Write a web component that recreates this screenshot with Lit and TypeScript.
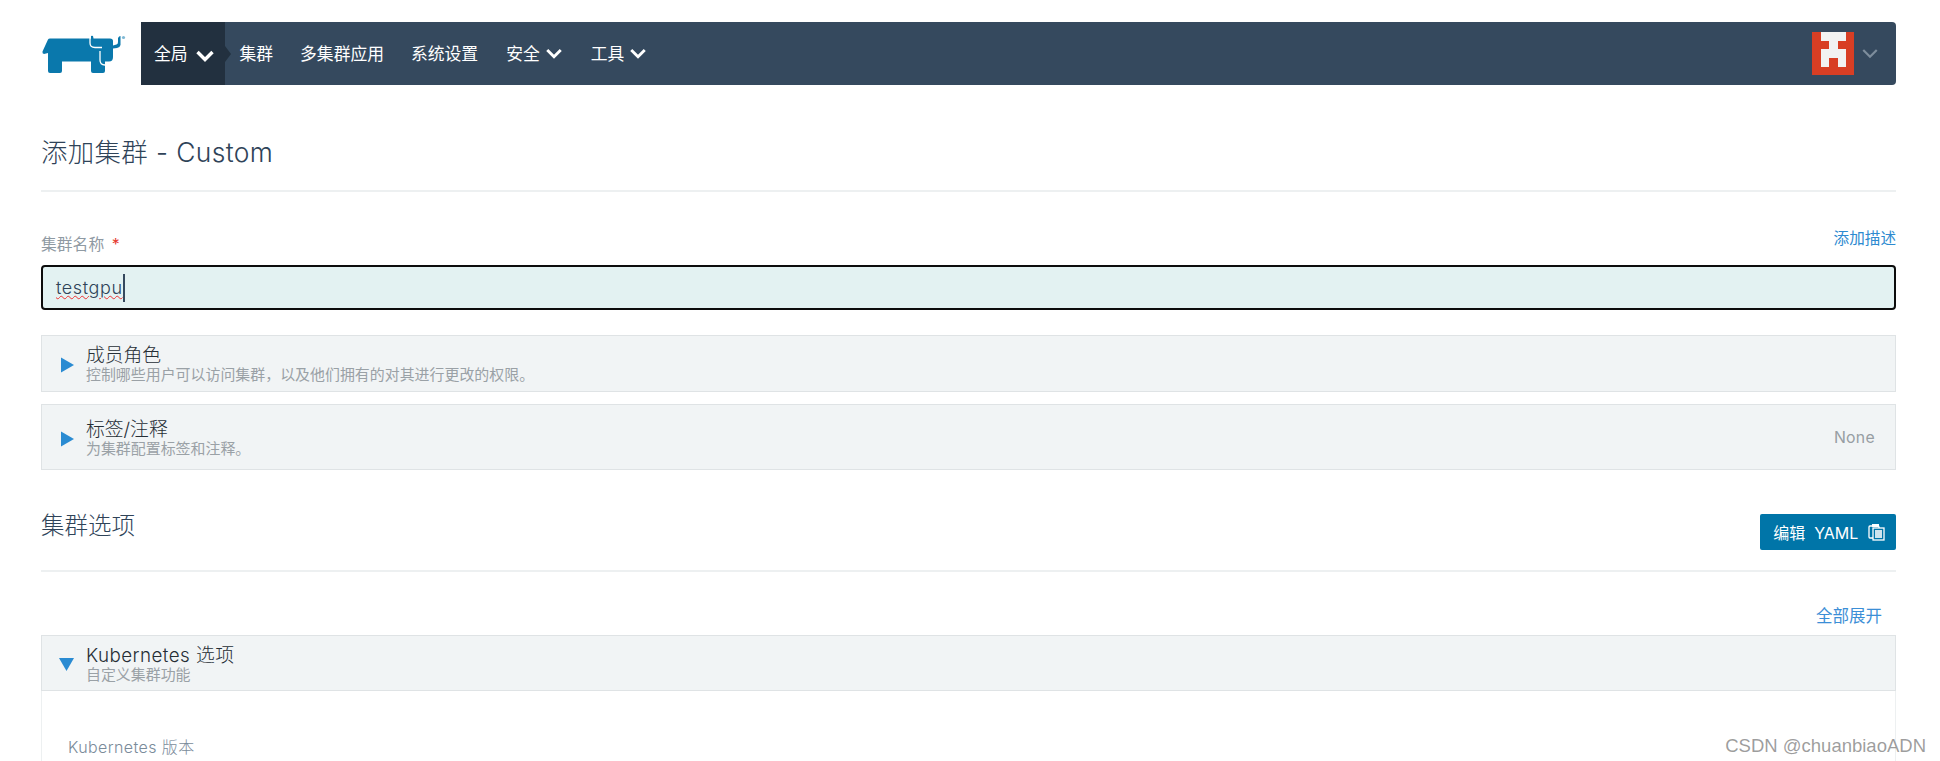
import { LitElement, html, css, svg } from "lit";
import { customElement } from "lit/decorators.js";

const chevron = (w: number, color = "#fff", sw = 3) => html`<svg class="chev" width=${w} height=${Math.round(w * 0.7)} viewBox="0 0 20 14"><path d="M2.5 3 L10 10.5 L17.5 3" fill="none" stroke=${color} stroke-width=${sw}/></svg>`;

const logo = svg`<svg width="86" height="40" viewBox="0 0 86 40">
  <path d="M6 4.5 Q6.5 3.5 8 3.5 L48 3.5 Q49 3.5 49 4 L49 1 Q50 0.5 51 1 L51.5 3.5 L68 3.5 Q71 3.5 71 6 L71 22 Q71 26.5 67 26.5 L63 26.5 L63 36 Q63 38 61 38 L51 38 Q49 38 49 36 L49 26.5 L20 26.5 L20 36 Q20 38 18 38 L8 38 Q6 38 6 36 L6 18 L2 19 Q0 18.5 0.5 16.5 Z" fill="#0a78ac"/>
  <path d="M76 3 Q77 1 78.5 1 L78.5 10 Q78 12.5 75 13 L71 13.5 L71 10.5 L74.5 9.5 Q76 9 76 7 Z" fill="#0a78ac"/>
  <path d="M48 3 L48 8 Q48 12.5 53 12.5 L60 12.5 M58 16 L58 25 Q58 30 63 30 L66 30" fill="none" stroke="#fff" stroke-width="1.3"/>
  <circle cx="81.5" cy="2.5" r="1.6" fill="#7fb8d4"/>
</svg>`;

const avatar = svg`<svg width="42" height="43" viewBox="0 0 42 43" shape-rendering="crispEdges">
  <rect width="42" height="43" fill="#d83e24"/>
  <path d="M8.5 0 H34 V8.5 H25.5 V17 H34 V34.5 H25.5 V26 H17 V34.5 H8.5 V17 H17 V8.5 H8.5 Z" fill="#f2f2f2"/>
</svg>`;

const pasteIcon = svg`<svg width="17" height="18" viewBox="0 0 17 18">
  <rect x="1" y="3" width="10" height="12" rx="1" fill="none" stroke="#fff" stroke-width="1.3"/>
  <rect x="5" y="5" width="11" height="12" fill="#0075a8" stroke="#fff" stroke-width="1.3"/>
  <rect x="7" y="7" width="7" height="8" fill="#cfe4ee"/>
  <rect x="4" y="1" width="7" height="3" fill="#fff"/>
</svg>`;

@customElement("app-root")
export class AppRoot extends LitElement {
  static styles = css`
    :host {
      display: block;
      position: relative;
      height: 761px;
      overflow: hidden;
      background: #fff;
      color: #2f4358;
      font-family: "Inter", "Noto Sans CJK SC", sans-serif;
      font-weight: 400;
    }
    .page { padding: 22px 44px 0 41px; }
    .top { display: flex; height: 63px; }
    .logo { width: 100px; display: flex; align-items: flex-start; padding-top: 13px; box-sizing: border-box; margin-left: 1px; margin-right: -1px; }
    .nav {
      flex: 1;
      display: flex;
      align-items: center;
      background: #35495e;
      border-radius: 0 4px 4px 0;
      color: #fff;
      font-size: 16.8px;
    }
    .nav .item { display: flex; align-items: center; gap: 5px; padding: 0 13.5px; height: 100%; line-height: 60px; }
    .nav .active {
      position: relative;
      width: 84px;
      box-sizing: border-box;
      padding: 0 0 0 13px;
      background: #22303f;
      gap: 7px;
    }
    .nav .active .chev { margin-top: 4px; }
    .nav .active::after {
      content: "";
      position: absolute;
      left: 100%;
      top: 50%;
      margin-top: -8px;
      border-left: 6px solid #22303f;
      border-top: 8px solid transparent;
      border-bottom: 8px solid transparent;
    }
    .nav .shift1 { margin-left: 1px; }
    .nav .spacer { flex: 1; }
    .nav .user { display: flex; align-items: center; gap: 7px; padding-right: 17px; }
    .chev { display: block; }
    .title {
      margin: 0;
      height: 107px;
      box-sizing: border-box;
      padding-top: 28px;
      border-bottom: 2px solid #edf0f1;
      display: flex;
      align-items: center;
      font-size: 26.4px;
      font-weight: 300;
      line-height: 46px;
      letter-spacing: 0.4px;
      white-space: pre;
    }
    .labelrow { display: flex; justify-content: space-between; margin-top: 43px; height: 30px; }
    .label { font-size: 15.8px; color: #8f9aa3; line-height: 18px; padding-top: 1px; }
    .label b { color: #e5372c; font-weight: 400; margin-left: 3px; }
    .desc { font-size: 15.6px; color: #2d8ad0; line-height: 18px; margin-top: -5px; }
    .input {
      height: 45px;
      box-sizing: border-box;
      border: 2px solid #0c0c0c;
      border-radius: 4px;
      background: #e3f2f2;
      display: flex;
      align-items: center;
      padding-left: 13px;
      font-size: 18px;
      letter-spacing: 0.6px;
      font-weight: 300;
    }
    .input span { text-decoration: underline wavy #e33; text-decoration-thickness: 1px; text-underline-offset: 1px; }
    .input i { display: block; width: 2px; height: 28px; background: #35495e; }
    .acc {
      display: flex;
      align-items: center;
      box-sizing: border-box;
      background: #f1f4f5;
      border: 1px solid #dfe3e5;
      padding-left: 19px;
    }
    .acc .tri { flex: none; display: block; margin-top: 3px; overflow: visible; }
    .acc .head { flex: 1; padding-top: 2px; }
    .acc .t { font-size: 18.8px; line-height: 21px; color: #262e35; font-weight: 300; }
    .acc .t.wide { letter-spacing: 0.45px; }
    .acc .s { font-size: 14.95px; line-height: 18px; color: #9aa1a6; }
    .a1 { height: 57px; margin-top: 25px; }
    .a2 { height: 66px; margin-top: 12px; }
    .a3 { height: 56px; }
    .acc .none { font-size: 15.8px; color: #979ea3; padding-right: 20px; letter-spacing: 0.3px; }
    .section {
      display: flex;
      justify-content: space-between;
      height: 71px;
      box-sizing: border-box;
      margin-top: 31px;
      border-bottom: 2px solid #edf0f1;
    }
    .section h2 { margin: 0; font-size: 23.5px; font-weight: 300; line-height: 28px; padding-top: 11px; }
    .btn {
      align-self: flex-start;
      margin-top: 13px;
      width: 136px;
      height: 36px;
      box-sizing: border-box;
      display: flex;
      align-items: center;
      justify-content: center;
      gap: 5px;
      padding-left: 2px;
      background: #0075a8;
      color: #fff;
      border-radius: 2px;
      font-size: 16px;
      white-space: pre;
    }
    .expand { display: flex; justify-content: flex-end; padding: 33px 14px 0 0; height: 63px; box-sizing: border-box; font-size: 16.5px; color: #3b8ed6; line-height: 22px; }
    .body {
      border: 1px solid #edf0f1;
      border-top: none;
      padding: 43px 26px 0;
      height: 120px;
      box-sizing: border-box;
      font-size: 16px;
      font-weight: 300;
      letter-spacing: 0.4px;
      color: #7a8b9a;
      white-space: pre;
    }
    .mark {
      position: absolute;
      right: 14px;
      bottom: 5px;
      font-family: "Liberation Sans", sans-serif;
      font-size: 18.5px;
      color: rgba(120, 120, 120, 0.72);
      line-height: 20px;
    }
  `;

  render() {
    const tri = (down = false) => html`<svg class="tri" width="25" height="16" viewBox="0 0 25 16"><path d=${down ? "M-2 1 H13 L5.5 14 Z" : "M0 0.5 L13 8 L0 15.5 Z"} fill="#2a8bd2"/></svg>`;
    return html`
      <div class="page">
        <header class="top">
          <div class="logo">${logo}</div>
          <nav class="nav">
            <div class="item active">全局 ${chevron(20, "#fff", 3.4)}</div>
            <div class="item shift1">集群</div>
            <div class="item">多集群应用</div>
            <div class="item">系统设置</div>
            <div class="item shift1">安全 ${chevron(18, "#fff", 3.2)}</div>
            <div class="item shift1">工具 ${chevron(18, "#fff", 3.2)}</div>
            <div class="spacer"></div>
            <div class="user">${avatar}${chevron(18, "#7d8d9c", 2.4)}</div>
          </nav>
        </header>
        <h1 class="title">添加集群 - Custom</h1>
        <div class="labelrow">
          <div class="label">集群名称 <b>*</b></div>
          <div class="desc">添加描述</div>
        </div>
        <div class="input"><span>testgpu</span><i></i></div>
        <div class="acc a1">${tri()}<div class="head"><div class="t">成员角色</div><div class="s">控制哪些用户可以访问集群，以及他们拥有的对其进行更改的权限。</div></div></div>
        <div class="acc a2">${tri()}<div class="head"><div class="t">标签/注释</div><div class="s">为集群配置标签和注释。</div></div><div class="none">None</div></div>
        <div class="section">
          <h2>集群选项</h2>
          <div class="btn">编辑  YAML ${pasteIcon}</div>
        </div>
        <div class="expand">全部展开</div>
        <div class="acc a3">${tri(true)}<div class="head"><div class="t wide">Kubernetes 选项</div><div class="s">自定义集群功能</div></div></div>
        <div class="body">Kubernetes 版本</div>
      </div>
      <div class="mark">CSDN @chuanbiaoADN</div>
    `;
  }
}
